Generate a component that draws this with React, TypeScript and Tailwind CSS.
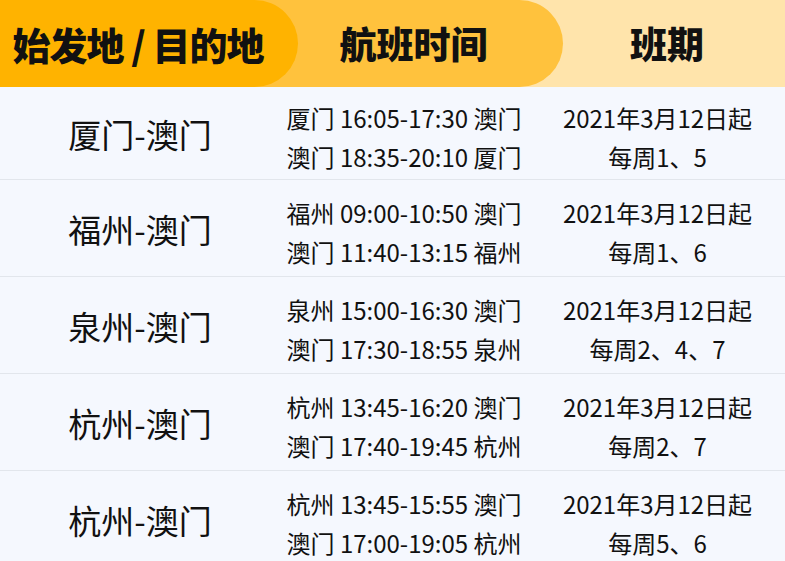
import React from "react";

type Route = {
  name: string;
  out: string;
  back: string;
  start: string;
  days: string;
};

const routes: Route[] = [
  {
    name: "厦门-澳门",
    out: "厦门 16:05-17:30 澳门",
    back: "澳门 18:35-20:10 厦门",
    start: "2021年3月12日起",
    days: "每周1、5",
  },
  {
    name: "福州-澳门",
    out: "福州 09:00-10:50 澳门",
    back: "澳门 11:40-13:15 福州",
    start: "2021年3月12日起",
    days: "每周1、6",
  },
  {
    name: "泉州-澳门",
    out: "泉州 15:00-16:30 澳门",
    back: "澳门 17:30-18:55 泉州",
    start: "2021年3月12日起",
    days: "每周2、4、7",
  },
  {
    name: "杭州-澳门",
    out: "杭州 13:45-16:20 澳门",
    back: "澳门 17:40-19:45 杭州",
    start: "2021年3月12日起",
    days: "每周2、7",
  },
  {
    name: "杭州-澳门",
    out: "杭州 13:45-15:55 澳门",
    back: "澳门 17:00-19:05 杭州",
    start: "2021年3月12日起",
    days: "每周5、6",
  },
];

export default function App() {
  return (
    <div
      className="h-[561px] w-[785px] overflow-hidden bg-[#f5f8fe] text-[#111]"
      style={{ fontFamily: '"Noto Sans CJK SC", "Noto Sans", sans-serif' }}
    >
      {/* header: three stacked tabs */}
      <div className="flex h-[87px] bg-[#ffe4ab]">
        <div className="flex h-full w-[563px] rounded-r-[44px] bg-[#ffc23d]">
          <div className="flex h-full w-[298px] items-center justify-center rounded-r-[44px] bg-[#ffb300] pr-[22px]">
            <span className="text-[38px] font-black tracking-[-1px]">始发地 / 目的地</span>
          </div>
          <div className="flex flex-1 items-center justify-center pr-[34px]">
            <span className="text-[37px] font-black">航班时间</span>
          </div>
        </div>
        <div className="flex flex-1 items-center justify-center pr-[14px]">
          <span className="text-[37px] font-black">班期</span>
        </div>
      </div>

      {routes.map((r, i) => (
        <div
          key={i}
          className={
            "flex items-center " +
            (i > 0 ? "h-[97px] border-t border-[#e2e6ec]" : "h-[92px]")
          }
        >
          <div className="w-[280px] pt-[2px] text-center text-[33px] leading-none">{r.name}</div>
          <div className="flex w-[252px] flex-col items-center pt-[7px] pr-[4px] text-[24px] leading-[39px]">
            <span>{r.out}</span>
            <span>{r.back}</span>
          </div>
          <div className="flex flex-1 flex-col items-center pt-[7px] pr-[2px] text-[24px] leading-[39px]">
            <span>{r.start}</span>
            <span>{r.days}</span>
          </div>
        </div>
      ))}
    </div>
  );
}
